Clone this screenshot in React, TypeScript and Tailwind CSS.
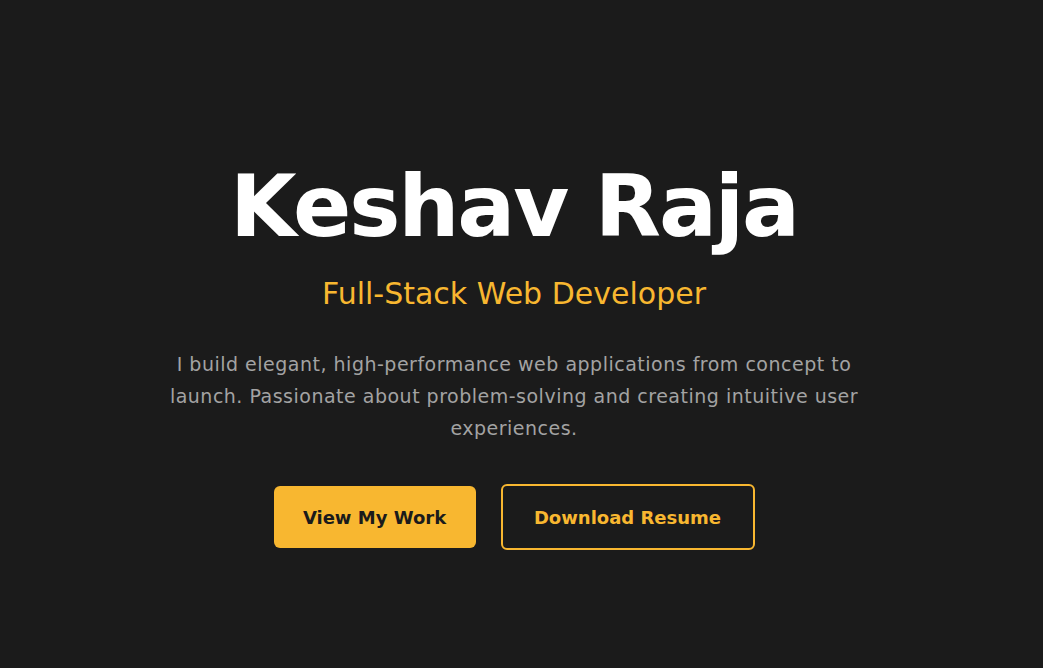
export default function App() {
  return (
    <main
      className="min-h-screen w-full bg-[#1b1b1b] pr-[15px] text-white"
      style={{ fontFamily: '"DejaVu Sans", "Noto Sans", sans-serif' }}
    >
      <section className="mx-auto flex max-w-4xl flex-col items-center px-4 pt-[163px] text-center">
        <h1 className="text-[86px] font-bold leading-none tracking-tight text-white">
          Keshav Raja
        </h1>
        <h2 className="mt-[30px] text-[30px] font-normal leading-none text-[#f8b730]">
          Full-Stack Web Developer
        </h2>
        <p className="mt-[39px] max-w-[710px] text-[19px] leading-[32px] tracking-[0.5px] text-[#a3a3a3]">
          I build elegant, high-performance web applications from concept to
          launch. Passionate about problem-solving and creating intuitive user
          experiences.
        </p>
        <div className="mt-[40px] flex items-center gap-[25px]">
          <a
            href="#projects"
            className="flex h-[62px] w-[202px] items-center justify-center rounded-md bg-[#f8b730] text-[18px] font-bold text-[#1b1b1b]"
          >
            View My Work
          </a>
          <a
            href="#resume"
            className="flex h-[66px] w-[254px] items-center justify-center rounded-md border-2 border-[#f8b730] text-[18px] font-bold text-[#f8b730]"
          >
            Download Resume
          </a>
        </div>
      </section>
    </main>
  );
}
